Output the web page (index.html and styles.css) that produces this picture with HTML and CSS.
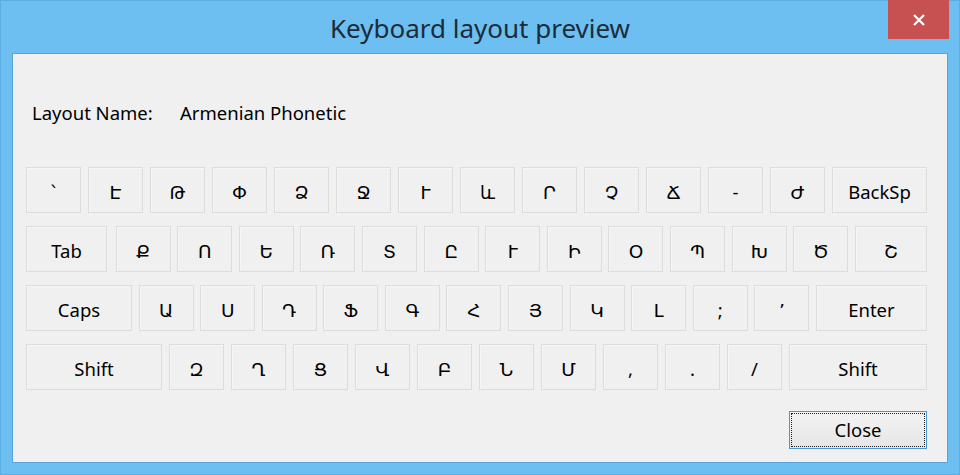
FILE: index.html
```html
<!DOCTYPE html>
<html lang="en">
<head>
<meta charset="utf-8">
<title>Keyboard layout preview</title>
<link rel="stylesheet" href="styles.css">
</head>
<body>
<div class="window">
  <div class="titlebar">
    <span class="title">Keyboard layout preview</span>
    <div class="close-x">
      <svg width="12" height="12" viewBox="0 0 12 12"><path d="M1 1 L11 11 M11 1 L1 11" stroke="#ffffff" stroke-width="2.2" fill="none"/></svg>
    </div>
  </div>
  <div class="content">
    <div class="layout-row"><span class="label">Layout Name:</span><span class="value">Armenian Phonetic</span></div>
    <div class="keyboard">
      <div class="row">
        <div class="key">՝</div><div class="key">Է</div><div class="key">Թ</div><div class="key">Փ</div><div class="key">Ձ</div><div class="key">Ջ</div><div class="key">Ւ</div><div class="key">և</div><div class="key">Ր</div><div class="key">Չ</div><div class="key">Ճ</div><div class="key">-</div><div class="key">Ժ</div><div class="key backsp">BackSp</div>
      </div>
      <div class="row">
        <div class="key tab">Tab</div><div class="key">Ք</div><div class="key">Ո</div><div class="key">Ե</div><div class="key">Ռ</div><div class="key">Տ</div><div class="key">Ը</div><div class="key">Ւ</div><div class="key">Ի</div><div class="key">Օ</div><div class="key">Պ</div><div class="key">Խ</div><div class="key">Ծ</div><div class="key wide-end">Շ</div>
      </div>
      <div class="row">
        <div class="key caps">Caps</div><div class="key">Ա</div><div class="key">Ս</div><div class="key">Դ</div><div class="key">Ֆ</div><div class="key">Գ</div><div class="key">Հ</div><div class="key">Յ</div><div class="key">Կ</div><div class="key">Լ</div><div class="key">;</div><div class="key">՚</div><div class="key enter">Enter</div>
      </div>
      <div class="row">
        <div class="key lshift">Shift</div><div class="key">Զ</div><div class="key">Ղ</div><div class="key">Ց</div><div class="key">Վ</div><div class="key">Բ</div><div class="key">Ն</div><div class="key">Մ</div><div class="key">,</div><div class="key">.</div><div class="key">/</div><div class="key rshift">Shift</div>
      </div>
    </div>
    <div class="footer"><button class="btn">Close</button></div>
  </div>
</div>
</body>
</html>
```

FILE: styles.css
```css
html, body {
  margin: 0;
  padding: 0;
}
body {
  width: 960px;
  height: 475px;
  overflow: hidden;
  font-family: "Noto Sans", "DejaVu Sans", sans-serif;
}
.window {
  box-sizing: border-box;
  height: 475px;
  background: #6cbff0;
  border: 1px solid #5aaee3;
  display: flex;
  flex-direction: column;
}
.titlebar {
  position: relative;
  height: 52px;
  box-sizing: border-box;
  padding-top: 9px;
  text-align: center;
  font-size: 26px;
  line-height: 36px;
  color: #1c2c3b;
}
.close-x {
  position: absolute;
  top: -1px;
  right: 10px;
  width: 61px;
  height: 39px;
  background: #c75050;
  display: flex;
  align-items: center;
  justify-content: center;
}
.close-x svg {
  display: block;
}
.content {
  flex: 1;
  margin: 0 11px 11px 11px;
  box-sizing: border-box;
  border: 1px solid #58a4da;
  background: #f0f0f0;
  color: #000;
}
.layout-row {
  display: flex;
  padding: 46px 0 0 19px;
  font-size: 18.5px;
  line-height: 25px;
}
.label {
  width: 148px;
}
.keyboard {
  margin-top: 42px;
  padding: 0 20px 0 13px;
  display: flex;
  flex-direction: column;
  gap: 13px;
}
.row {
  display: flex;
  justify-content: space-between;
  height: 46px;
}
.key {
  box-sizing: border-box;
  width: 55px;
  height: 46px;
  border: 1px solid #dcdcdc;
  background: #f0f0f0;
  box-shadow: inset 1px 1px 0 #f6f6f6;
  display: flex;
  align-items: center;
  justify-content: center;
  font-size: 18.5px;
  line-height: 25px;
  padding-top: 2px;
  color: #000;
}
.key.backsp { width: 95px; }
.key.tab { width: 81px; margin-right: 2px; }
.key.wide-end { width: 72px; }
.key.caps { width: 106px; }
.key.enter { width: 111px; }
.key.lshift { width: 136px; }
.key.rshift { width: 138px; }
.footer {
  display: flex;
  justify-content: flex-end;
  padding: 21px 20px 0 0;
}
.btn {
  box-sizing: border-box;
  width: 138px;
  height: 38px;
  margin: 0;
  padding: 0 0 1px 0;
  border: 1px solid #4a98dc;
  background: linear-gradient(#f3f3f3, #e6e6e6);
  outline: 1px dotted #222;
  outline-offset: -3px;
  font-family: "Noto Sans", "DejaVu Sans", sans-serif;
  font-size: 18.5px;
  color: #000;
}
```
